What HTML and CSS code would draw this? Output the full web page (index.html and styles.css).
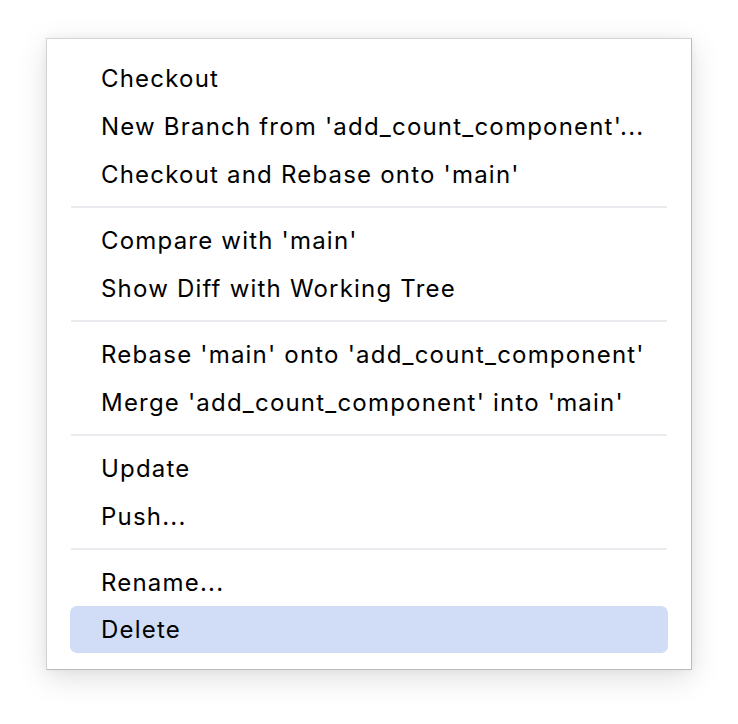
FILE: index.html
```html
<!DOCTYPE html>
<html>
<head>
<meta charset="utf-8">
<link rel="stylesheet" href="styles.css">
</head>
<body>
<div class="menu">
  <div class="item">Checkout</div>
  <div class="item">New Branch from 'add_count_component'...</div>
  <div class="item">Checkout and Rebase onto 'main'</div>
  <div class="sep"></div>
  <div class="item">Compare with 'main'</div>
  <div class="item">Show Diff with Working Tree</div>
  <div class="sep"></div>
  <div class="item">Rebase 'main' onto 'add_count_component'</div>
  <div class="item">Merge 'add_count_component' into 'main'</div>
  <div class="sep"></div>
  <div class="item">Update</div>
  <div class="item">Push...</div>
  <div class="sep"></div>
  <div class="item">Rename...</div>
  <div class="item active">Delete</div>
</div>
</body>
</html>
```

FILE: styles.css
```css
html, body {
  margin: 0;
  padding: 0;
  background: #ffffff;
}
body {
  width: 738px;
  height: 724px;
  overflow: hidden;
  padding: 38px 0 0 46px;
  box-sizing: border-box;
  font-family: Inter, "Noto Sans", sans-serif;
}
.menu {
  width: 646px;
  height: 632px;
  box-sizing: border-box;
  background: #ffffff;
  border: 1px solid #d4d4d4;
  border-right-color: #bcbcbc;
  border-bottom-color: #bcbcbc;
  box-shadow: 0 8px 28px rgba(0, 0, 0, 0.13), 0 0 8px rgba(0, 0, 0, 0.05);
  padding: 15px 23px;
  display: flex;
  flex-direction: column;
}
.item {
  height: 48px;
  display: flex;
  align-items: center;
  padding-left: 31px;
  font-size: 24px;
  letter-spacing: 1.2px;
  color: #000000;
  border-radius: 7px;
  white-space: nowrap;
}
.item.active {
  background: #d1ddf7;
  height: 47px;
}
.sep {
  height: 2px;
  margin: 8px 1px 8px 1px;
  background: #ebebef;
}
```
